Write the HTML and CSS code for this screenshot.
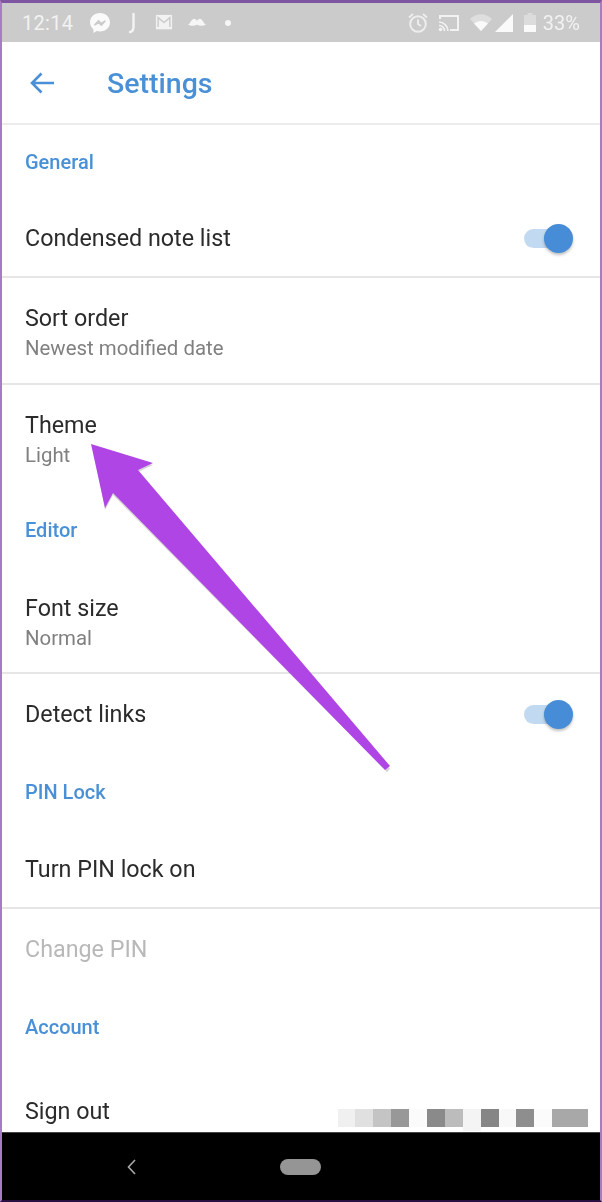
FILE: index.html
```html
<!DOCTYPE html>
<html lang="en">
<head>
    <meta charset="UTF-8">
    <meta name="viewport" content="width=device-width, initial-scale=1.0">
    <title>Settings</title>
    <link rel="stylesheet" href="styles.css">
</head>
<body>
    <div class="screen">

        <!-- status bar -->
        <div class="status">
            <span class="clock">12:14</span>
            <svg class="ic" style="width:22px" viewBox="0 0 22 22"><path fill="#fafafa" d="M11 1C5.300 1 1 5.100 1 10.300c0 2.900 1.300 5.300 3.400 7V21l3.400-1.900c1 .3 2.100.4 3.200.4 5.700 0 10-4 10-9.200S16.700 1 11 1z"/><path fill="none" stroke="#cbcbcb" stroke-width="1.500" d="M5.500 13l4-4.200 2.600 2.500 4.300-2.500-4 4.300-2.700-2.500z"/></svg>
            <svg class="ic" style="width:12px;margin-left:15px" viewBox="0 0 12 22"><path fill="none" stroke="#f4f4f4" stroke-width="2.400" stroke-linecap="round" d="M7.500 2v13c0 3-1 4.500-3.500 5"/></svg>
            <svg class="ic" style="width:18px;margin-left:17px" viewBox="0 0 20 18"><path fill="#f2f2f2" d="M1 1h18v16H1z"/><path fill="none" stroke="#cbcbcb" stroke-width="1.600" d="M3.500 14.500V4l6.500 5.500L16.500 4v10.500"/></svg>
            <svg class="ic" style="width:18px;margin-left:15px" viewBox="0 0 20 9"><path fill="#f6f6f6" d="M0 7C2 7 3.500 2 6 1c1.800-.5 3 .8 4 2.200C11 1.800 12.200.5 14 1c2.500 1 4 6 6 6-1.500 1.800-6.500 2.300-10 .6C6.500 9.300 1.500 8.800 0 7z"/></svg>
            <span class="dot"></span>

            <svg class="ic ic-alarm" style="width:22px" viewBox="0 0 22 22"><g fill="none" stroke="#ededed" stroke-width="2"><circle cx="11" cy="12" r="7.800"/><path d="M11 7.500V12l3 2M2 5.500L6 2M20 5.500L16 2"/></g></svg>
            <svg class="ic" style="width:22px;margin-left:9px" viewBox="0 0 22 18"><path fill="none" stroke="#f2f2f2" stroke-width="2" d="M2 5V2h18v14h-8"/><path fill="none" stroke="#f2f2f2" stroke-width="1.600" d="M1 8c4.500 0 9 4 9 9M1 11.500c3 0 5.500 2.500 5.500 5.500"/><circle cx="2.500" cy="15.500" r="1.800" fill="#f2f2f2"/></svg>
            <svg class="ic" style="width:22px;margin-left:10px" viewBox="0 0 22 17"><path fill="#dedede" d="M0 5c6-6.500 16-6.500 22 0L11 17z"/><path fill="#fafafa" d="M4 9.500c4-3.500 10-3.500 14 0L11 17z"/></svg>
            <svg class="ic" style="width:18px;margin-left:3px" viewBox="0 0 18 18"><path fill="#fafafa" d="M18 0v18H0z"/></svg>
            <svg class="ic" style="width:12px;margin-left:11px" viewBox="0 0 12 19"><path fill="#dcdcdc" d="M3.500 0h5v2H12v17H0V2h3.500z"/><path fill="#fafafa" d="M0 12h12v7H0z"/></svg>
            <span class="battery">33%</span>
        </div>

        <!-- toolbar -->
        <div class="toolbar">
            <svg class="back" viewBox="0 0 26 24"><path fill="none" stroke="#4a90d6" stroke-width="2.600" d="M25 12H3M12.500 2.500L3 12l9.500 9.500"/></svg>
            <h1 class="title">Settings</h1>
        </div>

        <div class="list">
            <div class="section section-first">General</div>
            <div class="row line">
                <span class="name">Condensed note list</span>
                <span class="toggle"></span>
            </div>
            <div class="row-two line">
                <div class="name">Sort order</div>
                <div class="sub">Newest modified date</div>
            </div>
            <div class="row-two">
                <div class="name">Theme</div>
                <div class="sub">Light</div>
            </div>
            <div class="section">Editor</div>
            <div class="row-two row-tight line">
                <div class="name">Font size</div>
                <div class="sub">Normal</div>
            </div>
            <div class="row">
                <span class="name">Detect links</span>
                <span class="toggle"></span>
            </div>
            <div class="section section-tight">PIN Lock</div>
            <div class="row line">
                <span class="name">Turn PIN lock on</span>
            </div>
            <div class="row">
                <span class="name name-off">Change PIN</span>
            </div>
            <div class="section section-tight">Account</div>
            <div class="row row-last">
                <span class="name">Sign out</span>
                <!-- pixelated email -->
                <div class="mosaic">
                    <i style="background:#f0f0f0"></i><i style="background:#e0e0e0"></i><i style="background:#c4c4c4"></i><i style="background:#989898"></i>
                    <i style="background:#fbfbfb"></i><i style="background:#8a8a8a"></i><i style="background:#bcbcbc"></i><i class="tall" style="background:#f4f4f4"></i>
                    <i style="background:#868686"></i><i style="background:#f8f8f8"></i><i style="background:#8e8e8e"></i><i style="background:#fbfbfb"></i>
                    <i style="background:#a8a8a8"></i><i style="background:#a8a8a8"></i>
                </div>
            </div>
        </div>

        <!-- nav bar -->
        <div class="nav">
            <svg class="nav-back" viewBox="0 0 9 16"><path fill="none" stroke="#a8a8a8" stroke-width="1.600" d="M8 1L1.500 8 8 15"/></svg>
            <span class="home"></span>
        </div>

        <!-- annotation -->
        <svg class="arrow" viewBox="0 0 602 1202">
            <path fill="#7a6a80" opacity=".3" d="M113 495L105 510 93 446 153 465 138 472 390 769 387 772z"/>
            <path fill="#b045e6" d="M91 444L153 463 138 470 390 766 385 770 113 493 105 508z"/>
        </svg>
    </div>
</body>
</html>
```

FILE: styles.css
```css
*{
    box-sizing:border-box;
}

html, body{
    margin:0;
    padding:0;
}

body{
    font-family:Roboto, "Liberation Sans", sans-serif;
    background:#fff;
}

.screen{
    position:relative;
    width:602px;
    height:1202px;
    display:flex;
    flex-direction:column;
    overflow:hidden;
    border:2px solid #a77cc4;
    border-top:3px solid #7d55a0;
    border-bottom:2px solid #2a1040;
    filter:blur(.45px);
}

/* status bar */
.status{
    height:39px;
    flex:none;
    display:flex;
    align-items:center;
    padding:0 20px 0 20px;
    background:#cbcbcb;
}

.clock{
    width:67px;
    font-size:20px;
    color:#f2f2f2;
    letter-spacing:.3px;
}

.ic{
    display:block;
    flex:none;
}

.dot{
    width:6px;
    height:6px;
    margin-left:19px;
    border-radius:50%;
    background:#f6f6f6;
}

.ic-alarm{
    margin-left:auto;
}

.battery{
    margin-left:7px;
    font-size:20px;
    color:#f2f2f2;
}

/* toolbar */
.toolbar{
    height:83px;
    flex:none;
    display:flex;
    align-items:center;
    padding-left:27px;
    border-bottom:2px solid #ececec;
}

.back{
    width:26px;
    height:24px;
}

.title{
    margin:2px 0 0 52px;
    font-size:28.500px;
    font-weight:500;
    color:#4a90d6;
}

/* list */
.list{
    flex:1;
    min-height:0;
    overflow:hidden;
}

.section{
    height:76px;
    display:flex;
    align-items:center;
    padding-left:23px;
    font-size:20px;
    font-weight:500;
    color:#4a90d6;
}

.section-first{
    height:73px;
}

.section-tight{
    height:75px;
}

.row{
    height:80px;
    display:flex;
    align-items:center;
    justify-content:space-between;
    padding:0 30px 0 23px;
}

.row.line{
    padding-top:2px;
}

.row-last{
    height:94px;
    padding-right:12px;
}

.row-two{
    height:107px;
    padding:26px 23px 0;
}

.row-tight{
    height:106px;
}

.line{
    border-bottom:2px solid #e6e6e6;
}

.name{
    font-size:23.300px;
    line-height:28px;
    color:#2b2b2b;
}

.name-off{
    color:#b8b8b8;
}

.sub{
    margin-top:1px;
    font-size:20.400px;
    line-height:30px;
    color:#808080;
}

.toggle{
    position:relative;
    width:46px;
    height:19px;
    border-radius:10px;
    background:#c2daf1;
}

.toggle::after{
    content:"";
    position:absolute;
    right:-3px;
    top:-5px;
    width:29px;
    height:29px;
    border-radius:50%;
    background:#468cd6;
    box-shadow:0 2px 3px rgba(0,0,0,.25);
}

.mosaic{
    display:flex;
    height:18px;
    margin-top:14px;
}

.mosaic i{
    display:block;
    width:17.900px;
}

.mosaic .tall{
    height:22px;
}

/* nav bar */
.nav{
    position:relative;
    height:68px;
    flex:none;
    display:flex;
    align-items:center;
    justify-content:center;
    background:#000;
    border-top:1px solid #444;
}

.nav-back{
    position:absolute;
    left:125px;
    top:26px;
    width:9px;
    height:16px;
}

.home{
    width:41px;
    height:16px;
    margin-right:2px;
    border-radius:8px;
    background:#959595;
}

.arrow{
    position:absolute;
    left:-2px;
    top:-3px;
    width:602px;
    height:1202px;
    pointer-events:none;
}
```
